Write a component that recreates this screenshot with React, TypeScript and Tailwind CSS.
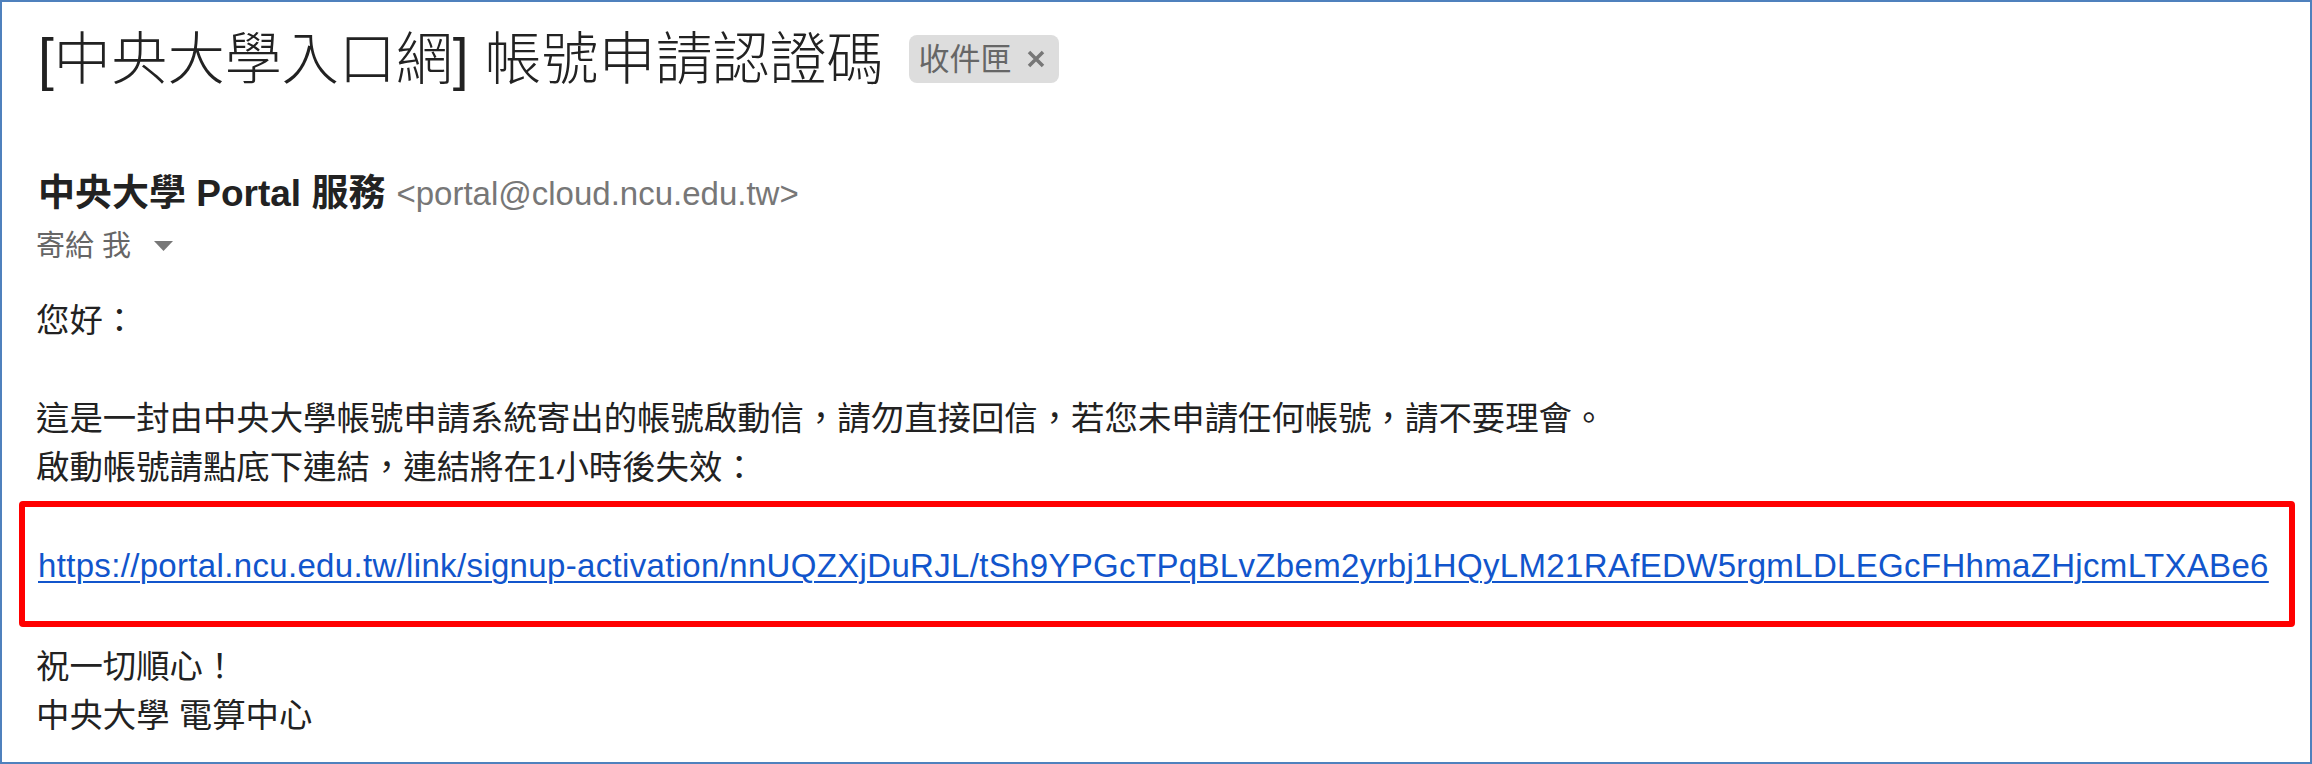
import React from 'react';

const link =
  'https://portal.ncu.edu.tw/link/signup-activation/nnUQZXjDuRJL/tSh9YPGcTPqBLvZbem2yrbj1HQyLM21RAfEDW5rgmLDLEGcFHhmaZHjcmLTXABe6';

const App = () => {
  return (
    <div className="w-[2312px] h-[764px] overflow-hidden bg-white border-2 border-[#4f81bd] font-['Liberation_Sans','Noto_Sans_CJK_TC',sans-serif] text-[#222222]">
      <div className="pl-[34px]">
        {/* Subject */}
        <div className="flex items-center mt-[29px] ml-[2px]">
          <h1 className="h-[56px] leading-[56px] text-[57px] font-light whitespace-nowrap">
            [中央大學入口網] 帳號申請認證碼
          </h1>
          <span className="ml-[25px] flex items-center h-[48px] w-[150px] pl-[10px] rounded-[8px] bg-[#dddddd] text-[#666666] text-[31px] leading-none">
            收件匣
            <svg className="ml-[15px] w-[18px] h-[18px]" viewBox="0 0 18 18">
              <path d="M2 2L16 16M16 2L2 16" stroke="#777777" strokeWidth="3.5" />
            </svg>
          </span>
        </div>

        {/* Sender */}
        <div className="mt-[85px] ml-[2px] h-[44px] leading-[44px] flex items-center whitespace-nowrap">
          <span className="text-[37px] font-bold">中央大學 Portal 服務</span>
          <span className="ml-[11px] text-[33px] text-[#777777]">&lt;portal@cloud.ncu.edu.tw&gt;</span>
        </div>
        <div className="mt-[12px] h-[36px] leading-[36px] flex items-center text-[29px] text-[#666666]">
          <span>寄給 我</span>
          <svg className="ml-[23px] w-[19px] h-[10px]" viewBox="0 0 19 10">
            <path d="M0 0H19L9.5 10Z" fill="#777777" />
          </svg>
        </div>

        {/* Body */}
        <div className="mt-[32px] text-[33.4px] leading-[49px]">
          <p>您好：</p>
          <p>&nbsp;</p>
          <p>這是一封由中央大學帳號申請系統寄出的帳號啟動信，請勿直接回信，若您未申請任何帳號，請不要理會。</p>
          <p>啟動帳號請點底下連結，連結將在1小時後失效：</p>
        </div>

        <div className="mt-[9px] -ml-[17px] w-[2276px] h-[126px] border-[6px] border-[#ff0000] rounded-[4px] flex items-center pl-[13px] pt-[3px]">
          <a
            href="#"
            className="text-[33px] leading-[49px] tracking-[0.33px] text-[#1155cc] underline decoration-2 underline-offset-[4px] whitespace-nowrap"
          >
            {link}
          </a>
        </div>

        <div className="mt-[15px] text-[33.4px] leading-[49px]">
          <p>祝一切順心！</p>
          <p>中央大學 電算中心</p>
        </div>
      </div>
    </div>
  );
};

export default App;
